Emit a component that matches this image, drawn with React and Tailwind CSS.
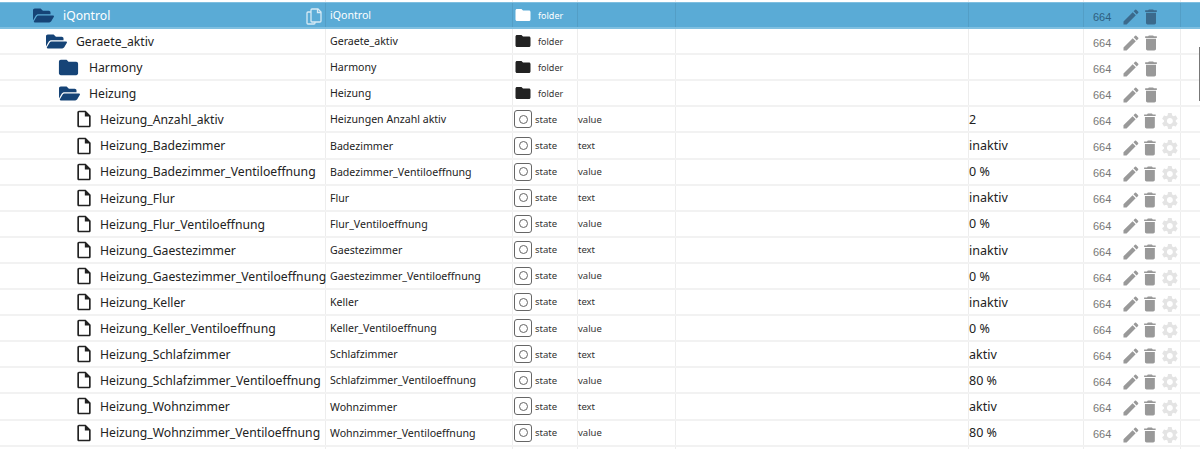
import { FaFolderOpen } from 'react-icons/fa';
import { MdDelete, MdEdit, MdFolder, MdOutlineInsertDriveFile, MdSettings } from 'react-icons/md';

const rows = [
  { name: 'iQontrol', label: 'iQontrol', kind: 'folder', open: true, depth: 0, selected: true },
  { name: 'Geraete_aktiv', label: 'Geraete_aktiv', kind: 'folder', open: true, depth: 1 },
  { name: 'Harmony', label: 'Harmony', kind: 'folder', depth: 2 },
  { name: 'Heizung', label: 'Heizung', kind: 'folder', open: true, depth: 2 },
  { name: 'Heizung_Anzahl_aktiv', label: 'Heizungen Anzahl aktiv', role: 'value', val: '2' },
  { name: 'Heizung_Badezimmer', label: 'Badezimmer', role: 'text', val: 'inaktiv' },
  { name: 'Heizung_Badezimmer_Ventiloeffnung', label: 'Badezimmer_Ventiloeffnung', role: 'value', val: '0 %' },
  { name: 'Heizung_Flur', label: 'Flur', role: 'text', val: 'inaktiv' },
  { name: 'Heizung_Flur_Ventiloeffnung', label: 'Flur_Ventiloeffnung', role: 'value', val: '0 %' },
  { name: 'Heizung_Gaestezimmer', label: 'Gaestezimmer', role: 'text', val: 'inaktiv' },
  { name: 'Heizung_Gaestezimmer_Ventiloeffnung', label: 'Gaestezimmer_Ventiloeffnung', role: 'value', val: '0 %' },
  { name: 'Heizung_Keller', label: 'Keller', role: 'text', val: 'inaktiv' },
  { name: 'Heizung_Keller_Ventiloeffnung', label: 'Keller_Ventiloeffnung', role: 'value', val: '0 %' },
  { name: 'Heizung_Schlafzimmer', label: 'Schlafzimmer', role: 'text', val: 'aktiv' },
  { name: 'Heizung_Schlafzimmer_Ventiloeffnung', label: 'Schlafzimmer_Ventiloeffnung', role: 'value', val: '80 %' },
  { name: 'Heizung_Wohnzimmer', label: 'Wohnzimmer', role: 'text', val: 'aktiv' },
  { name: 'Heizung_Wohnzimmer_Ventiloeffnung', label: 'Wohnzimmer_Ventiloeffnung', role: 'value', val: '80 %' }
];

const cell = 'h-full shrink-0 border-r border-black/[0.07] flex items-center';

function CopyIcon() {
  return (
    <svg
      className="absolute left-[306px] top-[5px] w-[16px] h-[17px] text-[#d6eaf5]"
      viewBox="0 0 16 17"
      fill="none"
      stroke="currentColor"
      strokeWidth="1.3"
    >
      <path d="M5 4H2a1 1 0 0 0-1 1v10a1 1 0 0 0 1 1h6a1 1 0 0 0 1-1v-1" />
      <path d="M6 1h6l3 3v9a1 1 0 0 1-1 1H6a1 1 0 0 1-1-1V2a1 1 0 0 1 1-1z" />
      <path d="M11.5 1v3.5H15" />
    </svg>
  );
}

function NameCell({ row }) {
  const isFolder = row.kind === 'folder';
  const indent = ['pl-[33px]', 'pl-[46px]', 'pl-[59px]'][row.depth];
  const nameColor = row.selected ? 'text-white' : 'text-[#222222]';

  return (
    <div className={`${cell} w-[326px] relative`}>
      {isFolder ? (
        <div className={`flex items-center ${indent}`}>
          {row.open ? (
            <FaFolderOpen className="w-[21px] h-[19px] text-[#164477]" />
          ) : (
            <MdFolder className="w-[23px] h-[23px] -ml-[2px] text-[#164477]" />
          )}
          <span className={`ml-[9px] pt-[2px] text-[12.2px] ${nameColor}`}>{row.name}</span>
        </div>
      ) : (
        <div className="flex items-center pl-[74px]">
          <MdOutlineInsertDriveFile className="w-[20px] h-[20px] text-[#222222]" />
          <span className="ml-[6px] pt-[2px] text-[12.2px] text-[#222222] whitespace-nowrap">{row.name}</span>
        </div>
      )}
      {row.selected && <CopyIcon />}
    </div>
  );
}

function TypeCell({ row }) {
  if (row.kind === 'folder') {
    return (
      <div className={`${cell} w-[65px] pl-[1px]`}>
        <MdFolder className={`w-[18px] h-[18px] ${row.selected ? 'text-white' : 'text-[#222222]'}`} />
        <span className={`ml-[6px] pt-[1px] text-[9px] ${row.selected ? 'text-white' : 'text-[#333333]'}`}>folder</span>
      </div>
    );
  }
  return (
    <div className={`${cell} w-[65px] pl-[1px]`}>
      <span className="w-[18px] h-[18px] rounded-[3px] border-[1.5px] border-[#666666] flex items-center justify-center">
        <span className="w-[9px] h-[9px] rounded-full border-[1.5px] border-[#666666]" />
      </span>
      <span className="ml-[3px] pt-[1px] text-[9.5px] text-[#333333]">state</span>
    </div>
  );
}

function Row({ row }) {
  const iconColor = row.selected ? 'text-[#3b6a8c]' : 'text-[#999999]';
  const labelColor = row.selected ? 'text-white' : 'text-[#222222]';
  const rowStyle = row.selected ? 'h-[27.1px] border-t bg-[#5aabd6] border-[#7fbfe0]' : 'h-[26.1px] border-[#f2f2f2]';

  return (
    <div className={`flex items-center border-b-2 ${rowStyle}`}>
      <NameCell row={row} />
      <div className={`${cell} w-[187px] pl-[4px] text-[10.6px] pt-[2px] ${labelColor}`}>{row.label}</div>
      <TypeCell row={row} />
      <div className={`${cell} w-[98px] text-[9.5px] pt-[1px] text-[#333333]`}>{row.role}</div>
      <div className={`${cell} w-[293px]`} />
      <div className={`${cell} w-[115px] text-[12.5px] pt-[2px] text-[#222222]`}>{row.val}</div>
      <div className={`${cell} w-[97px] pl-[9px] pt-[4px]`}>
        <span className={`w-[28px] font-['Liberation_Sans',sans-serif] text-[11px] ${row.selected ? 'text-[#2f5f80]' : 'text-[#777777]'}`}>664</span>
        <MdEdit className={`w-[20px] h-[20px] ${iconColor}`} />
        <MdDelete className={`w-[20px] h-[20px] ${iconColor}`} />
        {!row.kind && <MdSettings className="w-[20px] h-[20px] text-[#e4e4e4]" />}
      </div>
      <div className="h-full w-[19px]" />
    </div>
  );
}

function ColumnStub({ height }) {
  return (
    <div className={`flex ${height}`}>
      {['w-[326px]', 'w-[187px]', 'w-[65px]', 'w-[98px]', 'w-[293px]', 'w-[115px]', 'w-[97px]'].map((width) => (
        <div key={width} className={`${cell} ${width}`} />
      ))}
    </div>
  );
}

export default function App() {
  return (
    <div className="relative w-[1200px] h-[449px] overflow-hidden bg-white font-['Noto_Sans',sans-serif]">
      <ColumnStub height="h-[2px]" />
      {rows.map((row) => (
        <Row key={row.name} row={row} />
      ))}
      <ColumnStub height="h-[3px]" />
      <div className="absolute right-0 top-[47px] w-[1px] h-[54px] bg-[#777777]" />
    </div>
  );
}
